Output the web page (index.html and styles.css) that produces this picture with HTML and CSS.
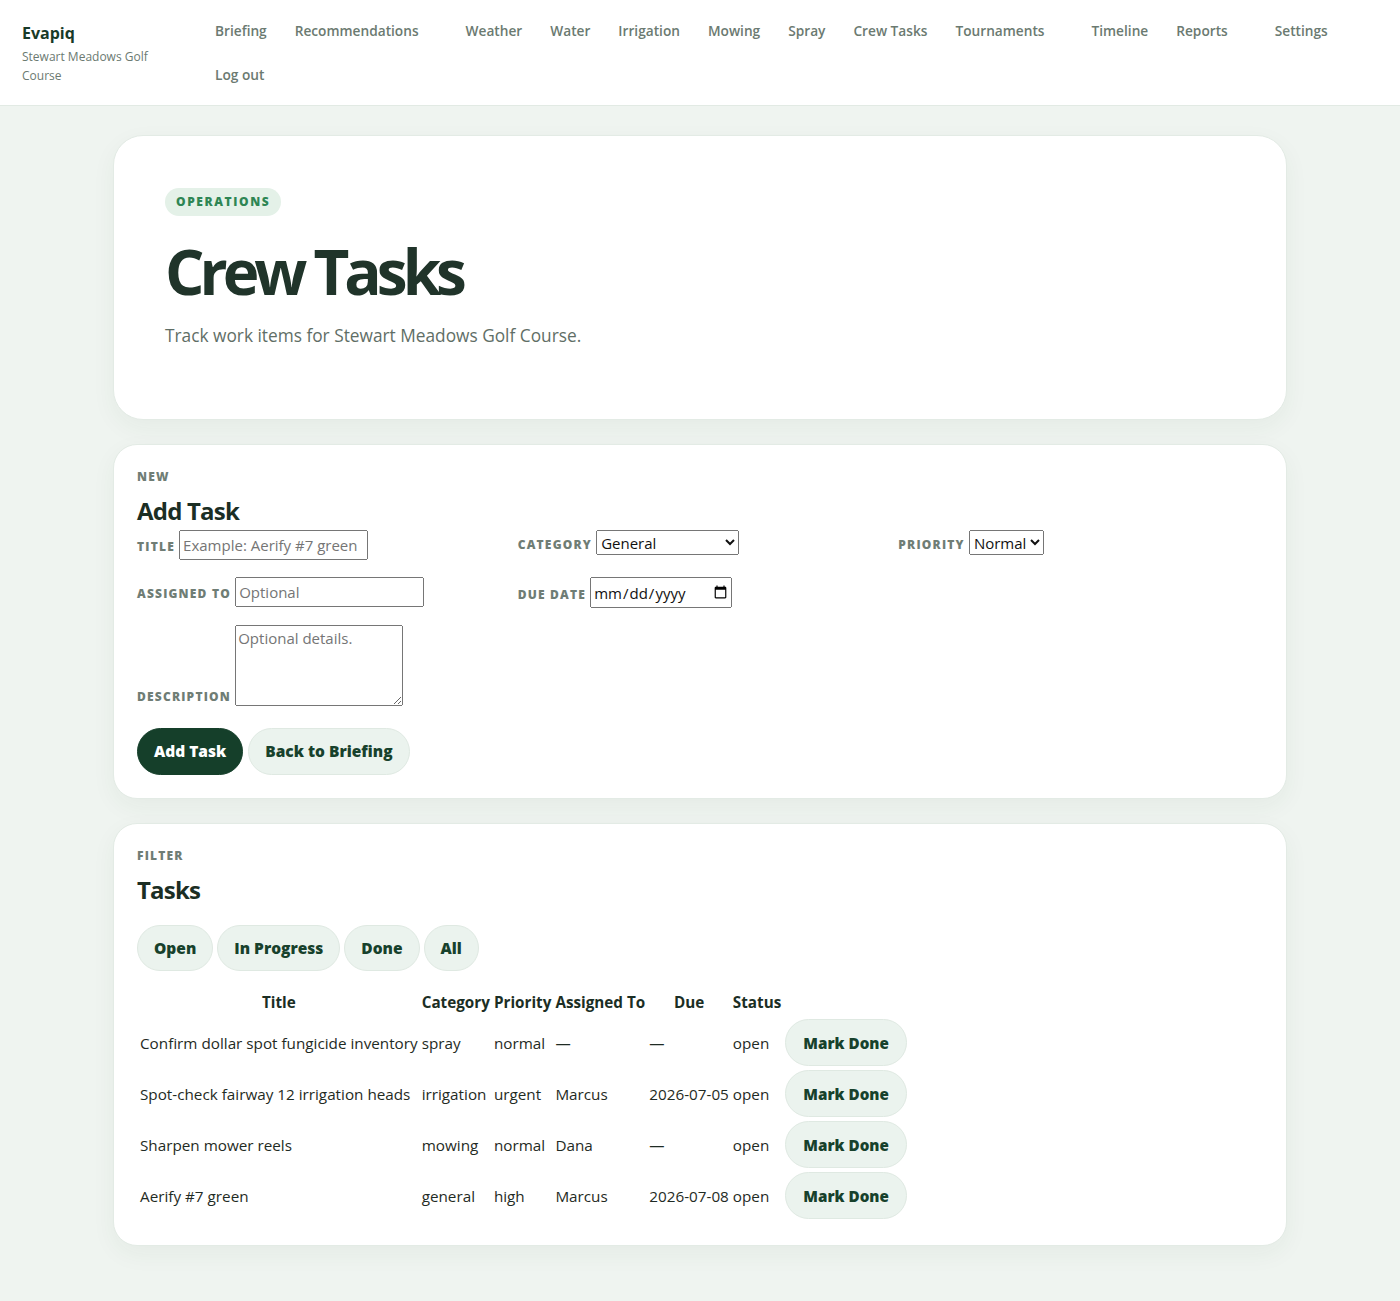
FILE: index.html
```html
<!DOCTYPE html>
<html lang="en">
<head>
  <meta charset="UTF-8" />
  <meta name="viewport" content="width=device-width, initial-scale=1.0"/>
  <title>Crew Tasks · Evapiq</title>
  <link rel="stylesheet" href="styles.css">
</head>
<body>

  <header class="topbar">
    <div class="brand">
      <div class="brand-name">Evapiq</div>
      <div class="brand-course">Stewart Meadows Golf Course</div>
    </div>
    <nav class="nav">
      <a href="#">Briefing</a>
      <a href="#" class="wide">Recommendations</a>
      <a href="#">Weather</a>
      <a href="#">Water</a>
      <a href="#">Irrigation</a>
      <a href="#">Mowing</a>
      <a href="#">Spray</a>
      <a href="#">Crew Tasks</a>
      <a href="#" class="wide">Tournaments</a>
      <a href="#">Timeline</a>
      <a href="#" class="wide">Reports</a>
      <a href="#">Settings</a>
      <a href="#">Log out</a>
    </nav>
  </header>

  <main class="page">
    <section class="card hero">
      <span class="badge">Operations</span>
      <h1>Crew Tasks</h1>
      <p class="lead">Track work items for Stewart Meadows Golf Course.</p>
    </section>

    <section class="card">
      <div class="eyebrow">New</div>
      <h2>Add Task</h2>
      <form class="task-form" onsubmit="return false">
        <div class="field">
          <label for="title">Title</label>
          <input id="title" type="text" class="in-text" placeholder="Example: Aerify #7 green">
        </div>
        <div class="field">
          <label for="category">Category</label>
          <select id="category" class="in-cat">
            <option>General</option>
            <option>Irrigation</option>
            <option>Mowing</option>
            <option>Spray</option>
          </select>
        </div>
        <div class="field">
          <label for="priority">Priority</label>
          <select id="priority" class="in-pri">
            <option>Low</option>
            <option selected>Normal</option>
            <option>High</option>
            <option>Urgent</option>
          </select>
        </div>
        <div class="field">
          <label for="assigned">Assigned To</label>
          <input id="assigned" type="text" class="in-text" placeholder="Optional">
        </div>
        <div class="field">
          <label for="due">Due Date</label>
          <input id="due" type="date" class="in-date">
        </div>
        <div class="field full">
          <label for="desc">Description</label>
          <textarea id="desc" placeholder="Optional details."></textarea>
        </div>
        <div class="actions">
          <button class="btn btn-primary">Add Task</button>
          <a href="#" class="btn">Back to Briefing</a>
        </div>
      </form>
    </section>

    <section class="card">
      <div class="eyebrow">Filter</div>
      <h2>Tasks</h2>
      <div class="filters">
        <a href="#" class="btn">Open</a>
        <a href="#" class="btn">In Progress</a>
        <a href="#" class="btn">Done</a>
        <a href="#" class="btn">All</a>
      </div>

      <table class="tasks">
        <thead>
          <tr>
            <th>Title</th>
            <th>Category</th>
            <th>Priority</th>
            <th>Assigned To</th>
            <th>Due</th>
            <th>Status</th>
            <th></th>
          </tr>
        </thead>
        <tbody>
          <tr>
            <td>Confirm dollar spot fungicide inventory</td>
            <td>spray</td>
            <td>normal</td>
            <td>—</td>
            <td>—</td>
            <td>open</td>
            <td><button class="btn">Mark Done</button></td>
          </tr>
          <tr>
            <td>Spot-check fairway 12 irrigation heads</td>
            <td>irrigation</td>
            <td>urgent</td>
            <td>Marcus</td>
            <td>2026-07-05</td>
            <td>open</td>
            <td><button class="btn">Mark Done</button></td>
          </tr>
          <tr>
            <td>Sharpen mower reels</td>
            <td>mowing</td>
            <td>normal</td>
            <td>Dana</td>
            <td>—</td>
            <td>open</td>
            <td><button class="btn">Mark Done</button></td>
          </tr>
          <tr>
            <td>Aerify #7 green</td>
            <td>general</td>
            <td>high</td>
            <td>Marcus</td>
            <td>2026-07-08</td>
            <td>open</td>
            <td><button class="btn">Mark Done</button></td>
          </tr>
        </tbody>
      </table>
    </section>
  </main>

</body>
</html>
```

FILE: styles.css
```css
body {
  margin: 0;
  font-family: 'Open Sans', 'Noto Sans', sans-serif;
  background-color: #eff4f0;
  color: #1f2b24;
}

/* Top bar */
.topbar {
  display: flex;
  align-items: flex-start;
  padding: 21px 22px 20px;
  background: #fff;
  border-bottom: 1px solid #e2eae4;
}

.brand {
  flex: 0 0 150px;
  margin-right: 43px;
}

.brand-name {
  font-size: 16px;
  font-weight: 700;
  color: #183a28;
  line-height: 24px;
}

.brand-course {
  font-size: 12px;
  color: #6b7a71;
  line-height: 19px;
  margin-top: 2px;
}

.nav {
  flex: 1;
  display: flex;
  flex-wrap: wrap;
  column-gap: 28px;
  row-gap: 24px;
}

.nav a {
  font-size: 13.7px;
  font-weight: 600;
  color: #6b7a71;
  text-decoration: none;
  line-height: 20px;
}

.nav a.wide {
  margin-right: 19px;
}

/* Page */
.page {
  max-width: 1174px;
  margin: 0 auto;
  padding: 29px 0 57px;
  display: flex;
  flex-direction: column;
  gap: 24px;
}

.card {
  background: #fff;
  border: 1px solid #e3ebe5;
  border-radius: 24px;
  padding: 23px;
  box-shadow: 0 8px 24px rgba(30, 70, 45, 0.05);
}

.hero {
  border-radius: 30px;
  padding: 52px 51px 72px;
}

.badge {
  display: inline-block;
  background: #e4f1e8;
  color: #2e8654;
  font-size: 12px;
  font-weight: 800;
  letter-spacing: 1.6px;
  text-transform: uppercase;
  padding: 5px 11px;
  border-radius: 999px;
  line-height: 18px;
}

.hero h1 {
  margin: 17px 0 0;
  font-size: 62px;
  line-height: 76px;
  font-weight: 700;
  letter-spacing: -5px;
  color: #20342a;
}

.lead {
  margin: 15px 0 0;
  font-size: 17.3px;
  color: #5f6e66;
}

.eyebrow {
  font-size: 12px;
  font-weight: 800;
  letter-spacing: 1.2px;
  text-transform: uppercase;
  color: #6f7d75;
  line-height: 18px;
}

.card h2 {
  margin: 10px 0 0;
  font-size: 24px;
  line-height: 30px;
  font-weight: 700;
  letter-spacing: -0.8px;
  color: #1b2e24;
}

/* Add task form */
.task-form {
  display: grid;
  grid-template-columns: repeat(3, 1fr);
  column-gap: 16px;
  row-gap: 17px;
  margin-top: 4px;
}

.field label {
  font-size: 12px;
  font-weight: 800;
  letter-spacing: 1.2px;
  text-transform: uppercase;
  color: #6f7d75;
}

.field.full {
  grid-column: 1 / -1;
}

.field input,
.field select,
.field textarea {
  font-family: inherit;
  font-size: 15px;
  color: #111;
  box-sizing: border-box;
}

.in-text {
  width: 189px;
  height: 30px;
}

.in-cat {
  width: 143px;
  height: 25px;
}

.in-pri {
  width: 75px;
  height: 25px;
}

.in-date {
  width: 142px;
  height: 31px;
}

.field textarea {
  width: 168px;
  height: 81px;
  resize: both;
  vertical-align: bottom;
}

.actions {
  grid-column: 1 / -1;
  display: flex;
  gap: 5px;
  margin-top: 5px;
}

.btn {
  display: inline-block;
  font-family: inherit;
  font-size: 15.5px;
  font-weight: 800;
  color: #17412c;
  background: #ebf3ee;
  border: 1px solid #dfe9e2;
  border-radius: 999px;
  padding: 11px 16px 12px;
  line-height: 22px;
  text-decoration: none;
  cursor: pointer;
}

.btn-primary {
  background: #153f2a;
  border-color: #153f2a;
  color: #fff;
}

/* Tasks list */
.filters {
  display: flex;
  gap: 4px;
  margin-top: 20px;
}

.filters .btn {
  padding: 11px 16px;
}

.tasks {
  margin-top: 17px;
  font-size: 15.25px;
  color: #1f2b24;
}

.tasks th {
  font-weight: 700;
  color: #1b2e24;
  line-height: 22px;
  padding-bottom: 3px;
}

.tasks td {
  line-height: 22px;
}

.tasks td .btn {
  font-size: 15.2px;
  padding: 12px 17px 11px;
}
```
